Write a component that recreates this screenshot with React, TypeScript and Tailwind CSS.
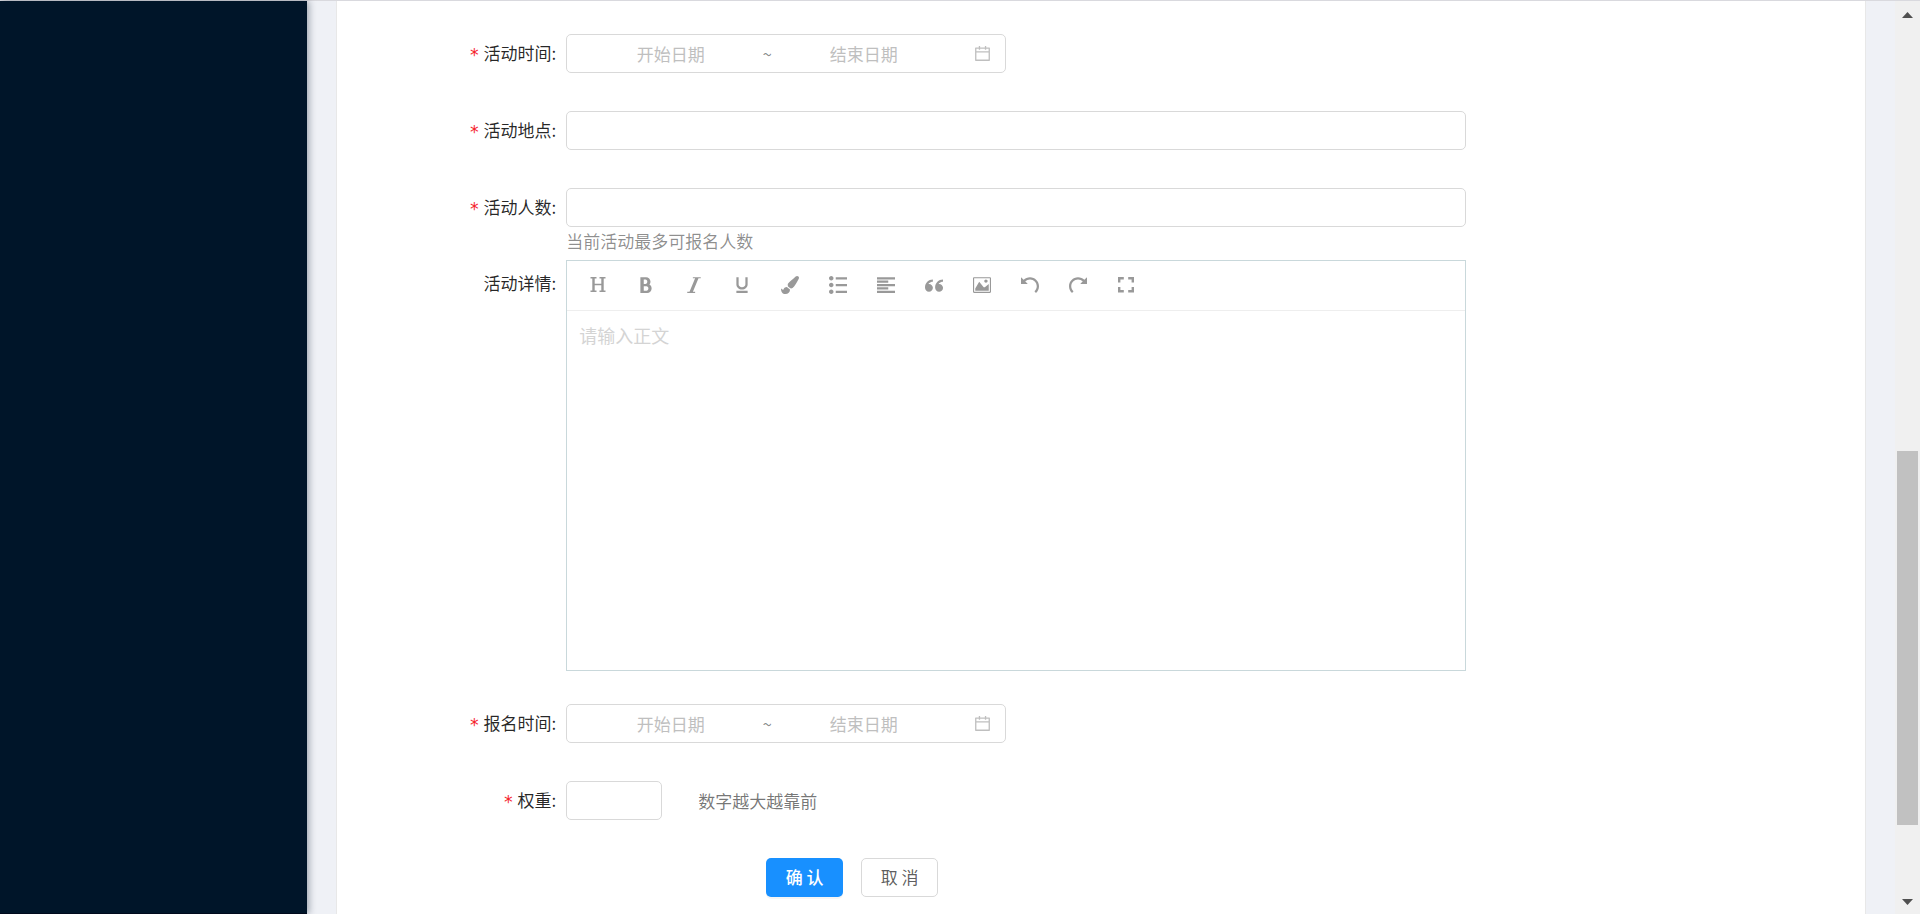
import type { ReactNode } from 'react';
import { FaPaintBrush } from 'react-icons/fa';
import {
  ImBold,
  ImImage,
  ImItalic,
  ImList2,
  ImParagraphLeft,
  ImQuotesLeft,
  ImRedo,
  ImUnderline,
  ImUndo,
} from 'react-icons/im';

const HeadingIcon = () => (
  <svg viewBox="0 0 18 18" width="18" height="18" fill="none" stroke="currentColor">
    <path strokeWidth="2.4" d="M4.500 1.500v14M13.500 1.500v14" />
    <path strokeWidth="1.600" d="M1.500 1.800h6M10.500 1.800h6M1.500 15.200h6M10.500 15.200h6M4.500 8.500h9" />
  </svg>
);

const FullscreenIcon = () => (
  <svg viewBox="0 0 18 18" width="18" height="18" fill="none" stroke="currentColor" strokeWidth="2.4">
    <path d="M2.200 6.500V2.200h4.600M11.200 2.200h4.600v4.300M15.800 11v4.300h-4.600M6.800 15.300H2.200V11" />
  </svg>
);

const CalendarIcon = () => (
  <svg viewBox="0 0 1024 1024" width="19" height="19" fill="currentColor">
    <path d="M880 184H712v-64c0-4.400-3.600-8-8-8h-56c-4.400 0-8 3.600-8 8v64H384v-64c0-4.400-3.600-8-8-8h-56c-4.400 0-8 3.600-8 8v64H144c-17.700 0-32 14.300-32 32v664c0 17.700 14.300 32 32 32h736c17.700 0 32-14.300 32-32V216c0-17.700-14.300-32-32-32zm-40 656H184V460h656v380zM184 392V256h128v48c0 4.400 3.600 8 8 8h56c4.400 0 8-3.600 8-8v-48h256v48c0 4.400 3.600 8 8 8h56c4.400 0 8-3.600 8-8v-48h128v136H184z" />
  </svg>
);

const tools = [
  { name: '标题', icon: <HeadingIcon /> },
  { name: '粗体', icon: <ImBold size={18} /> },
  { name: '斜体', icon: <ImItalic size={18} /> },
  { name: '下划线', icon: <ImUnderline size={18} /> },
  { name: '文字颜色', icon: <FaPaintBrush size={18} /> },
  { name: '列表', icon: <ImList2 size={18} /> },
  { name: '对齐', icon: <ImParagraphLeft size={18} /> },
  { name: '引用', icon: <ImQuotesLeft size={18} /> },
  { name: '图片', icon: <ImImage size={18} /> },
  { name: '撤销', icon: <ImUndo size={18} /> },
  { name: '恢复', icon: <ImRedo size={18} /> },
  { name: '全屏', icon: <FullscreenIcon /> },
];

const inputClass =
  'h-[39px] rounded-[5px] border border-[#d9d9d9] bg-white px-3 outline-none focus:border-[#40a9ff]';

interface RowProps {
  id: string;
  label: string;
  required?: boolean;
  tall?: boolean;
  children: ReactNode;
}

const Row = ({ id, label, required, tall, children }: RowProps) => (
  <div className="flex items-start">
    <label
      htmlFor={id}
      className={`flex w-[15%] shrink-0 items-center justify-end pb-0.5 text-black/85 ${tall ? 'h-12' : 'h-[39px]'}`}
    >
      {required && (
        <span className="mr-1 pt-1 font-['DejaVu_Sans_Mono','Noto_Sans_CJK_SC',monospace] text-[#f5222d]">*</span>
      )}
      {label}
      <span className="mr-2.5">:</span>
    </label>
    <div className="min-w-0 max-w-[900px] flex-1">{children}</div>
  </div>
);

const RangePicker = ({ id }: { id: string }) => (
  <div className="flex h-[39px] w-[440px] items-center rounded-[5px] border border-[#d9d9d9] px-[13px]">
    <input
      id={id}
      placeholder="开始日期"
      className="w-[181px] text-center outline-none placeholder:text-[#bfbfbf]"
    />
    <span className="w-3 text-center text-black/45">~</span>
    <input
      aria-label="结束日期"
      placeholder="结束日期"
      className="w-[181px] text-center outline-none placeholder:text-[#bfbfbf]"
    />
    <span className="ml-auto text-black/25">
      <CalendarIcon />
    </span>
  </div>
);

const Editor = () => (
  <div className="border border-[#c9d8db]">
    <div className="flex h-[50px] items-start border-b border-[#eee] px-[7px] text-[#999]">
      {tools.map((tool) => (
        <button
          key={tool.name}
          type="button"
          aria-label={tool.name}
          className="flex h-12 w-12 items-center justify-center hover:text-[#333]"
        >
          {tool.icon}
        </button>
      ))}
    </div>
    <textarea
      id="detail"
      placeholder="请输入正文"
      className="block h-[359px] w-full resize-none px-3 py-2.5 text-[18px] leading-7 outline-none placeholder:text-[#d4d4d4]"
    />
  </div>
);

const Scrollbar = () => (
  <div className="flex w-[25px] shrink-0 flex-col items-center bg-[#f0f0f0] pt-[11px] pb-[9px]">
    <svg viewBox="0 0 11 6" width="11" height="6" fill="#505050">
      <path d="M5.500 0L11 6H0z" />
    </svg>
    <div className="flex-[433]" />
    <div className="w-[21px] flex-[375] bg-[#c1c1c1]" />
    <div className="flex-[74]" />
    <svg viewBox="0 0 11 6" width="11" height="6" fill="#505050">
      <path d="M0 0h11L5.500 6z" />
    </svg>
  </div>
);

export default function App() {
  return (
    <div className="flex min-h-screen border-t border-[#d9d9de] bg-[#f0f2f5] font-['Noto_Sans_CJK_SC',sans-serif] text-[17px] leading-6">
      <aside className="z-10 w-[307px] shrink-0 border-b border-[#000a1c] bg-[#001529] shadow-[2px_0_7px_rgba(0,21,41,0.35)]" />
      <main className="flex min-w-0 flex-1 bg-[#eff1f6] px-[29px]">
        <form className="flex flex-1 flex-col gap-[38px] border-x border-[#e8e8e8] bg-white pt-[33px]">
          <Row id="time" label="活动时间" required>
            <RangePicker id="time" />
          </Row>
          <Row id="place" label="活动地点" required>
            <input id="place" className={`${inputClass} block w-full`} />
          </Row>
          <div>
            <Row id="count" label="活动人数" required>
              <input id="count" className={`${inputClass} block w-full`} />
              <p className="h-[33px] pt-0.5 text-black/45">当前活动最多可报名人数</p>
            </Row>
            <Row id="detail" label="活动详情" tall>
              <Editor />
            </Row>
          </div>
          <div className="-mt-[5px]">
            <Row id="signup" label="报名时间" required>
              <RangePicker id="signup" />
            </Row>
          </div>
          <Row id="weight" label="权重" required>
            <div className="flex items-center gap-9">
              <input id="weight" className={`${inputClass} w-24`} />
              <span className="text-black/55">数字越大越靠前</span>
            </div>
          </Row>
          <div className="flex pl-[15%]">
            <div className="flex gap-[18px] pl-[200px]">
              <button
                type="submit"
                className="h-[39px] w-[77px] rounded-[5px] bg-[#1890ff] pb-px font-medium text-white shadow-[0_2px_0_rgba(0,0,0,0.04)]"
              >
                确 认
              </button>
              <button
                type="button"
                className="h-[39px] w-[77px] rounded-[5px] border border-[#d9d9d9] bg-white pb-px text-black/65"
              >
                取 消
              </button>
            </div>
          </div>
        </form>
      </main>
      <Scrollbar />
    </div>
  );
}
